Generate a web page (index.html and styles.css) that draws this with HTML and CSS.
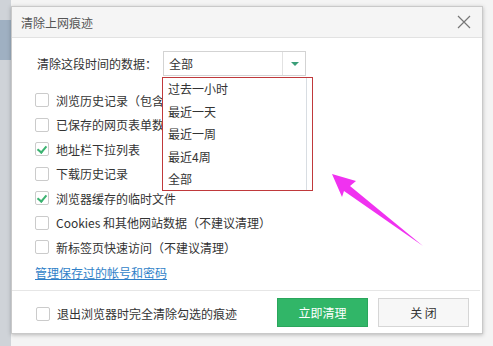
FILE: index.html
```html
<!DOCTYPE html>
<html lang="zh-CN">

<head>
     <meta charset="UTF-8">
     <title>清除上网痕迹</title>
     <link rel="stylesheet" href="styles.css">
</head>

<body>
     <div class="desk">
          <div class="behind"></div>
          <div class="dialog">
               <div class="title">
                    <span>清除上网痕迹</span>
                    <svg class="close" width="14" height="14" viewBox="0 0 14 14">
                         <path d="M1 1L13 13M13 1L1 13" stroke="#777" stroke-width="1.2" fill="none" />
                    </svg>
               </div>
               <div class="content">
                    <div class="range">
                         <span class="label">清除这段时间的数据：</span>
                         <div class="select">
                              <span class="value">全部</span>
                              <span class="caret"></span>
                         </div>
                    </div>
                    <ul class="list">
                         <li><i class="box"></i>浏览历史记录（包含</li>
                         <li><i class="box"></i>已保存的网页表单数</li>
                         <li><i class="box on"></i>地址栏下拉列表</li>
                         <li><i class="box"></i>下载历史记录</li>
                         <li><i class="box on"></i>浏览器缓存的临时文件</li>
                         <li><i class="box"></i>Cookies 和其他网站数据（不建议清理）</li>
                         <li><i class="box"></i>新标签页快速访问（不建议清理）</li>
                    </ul>
                    <a class="manage" href="#">管理保存过的帐号和密码</a>
               </div>
               <div class="foot">
                    <label class="quit"><i class="box"></i>退出浏览器时完全清除勾选的痕迹</label>
                    <button class="btn go">立即清理</button>
                    <button class="btn">关 闭</button>
               </div>

               <ul class="menu">
                    <li>过去一小时</li>
                    <li>最近一天</li>
                    <li>最近一周</li>
                    <li>最近4周</li>
                    <li>全部</li>
               </ul>
          </div>

          <svg class="pointer" width="493" height="346" viewBox="0 0 493 346">
               <polygon points="332,174 356,181 350,186 423,246 344,191 342,197" fill="#f032f0" />
          </svg>
     </div>
</body>

</html>
```

FILE: styles.css
```css
* {
     margin: 0;
     padding: 0;
     box-sizing: border-box;
}

body {
     width: 493px;
     height: 346px;
     overflow: hidden;
     background: #ececec;
     font-family: "Microsoft YaHei", "Noto Sans CJK SC", sans-serif;
     font-size: 12px;
     color: #333;
}

.desk {
     position: relative;
     width: 493px;
     height: 346px;
     padding: 6px 0 0 11px;
     background: linear-gradient(to right, #cfd3d8 0, #cfd3d8 11px, #f4f4f4 11px);
}

.behind {
     position: absolute;
     left: 0;
     top: 20px;
     width: 11px;
     height: 40px;
     background: #9fb0c2;
}

.dialog {
     position: relative;
     width: 472px;
     height: 328px;
     background: #fff;
     border: 1px solid #c9c9c9;
     box-shadow: 0 1px 4px rgba(0, 0, 0, 0.25);
     display: flex;
     flex-direction: column;
}

.title {
     height: 31px;
     background: #f5f5f5;
     border-bottom: 1px solid #e2e2e2;
     display: flex;
     align-items: center;
     justify-content: space-between;
     padding: 0 11px 0 9px;
     color: #555;
}

.content {
     flex: 1;
     padding: 13px 0 0 23px;
}

.range {
     display: flex;
     align-items: center;
     padding-left: 2px;
}

.label {
     width: 126px;
}

.select {
     width: 143px;
     height: 25px;
     border: 1px solid #d3d3d3;
     display: flex;
     align-items: center;
     justify-content: space-between;
}

.value {
     padding-left: 5px;
}

.caret {
     width: 23px;
     height: 23px;
     border-left: 1px solid #e2e2e2;
     position: relative;
}

.caret::after {
     content: "";
     position: absolute;
     left: 8px;
     top: 10px;
     border-left: 4px solid transparent;
     border-right: 4px solid transparent;
     border-top: 4px solid #3a9e79;
}

.list {
     list-style: none;
     margin-top: 12px;
}

.list li {
     height: 24.5px;
     display: flex;
     align-items: center;
}

.box {
     display: inline-block;
     flex: none;
     width: 14px;
     height: 14px;
     border: 1px solid #cbcbcb;
     border-radius: 2px;
     background: #fff;
     margin-right: 7px;
     position: relative;
}

.box.on::after {
     content: "";
     position: absolute;
     left: 3px;
     top: 1px;
     width: 4px;
     height: 7px;
     border-right: 2px solid #3cb371;
     border-bottom: 2px solid #3cb371;
     transform: rotate(40deg);
}

.manage {
     display: block;
     margin-top: 4px;
     color: #2f7fc8;
     text-decoration: underline;
}

.foot {
     height: 43px;
     border-top: 1px solid #e6e6e6;
     display: flex;
     align-items: center;
     padding: 0 11px 0 24px;
     margin-right: 2px;
}

.quit {
     flex: 1;
     display: flex;
     align-items: center;
     padding-top: 3px;
}

.btn {
     flex: none;
     width: 91px;
     height: 29px;
     font-family: inherit;
     font-size: 12px;
     border: 1px solid #d6d6d6;
     background: #f7f7f7;
     color: #333;
     margin-left: 10px;
}

.btn.go {
     background: #31b668;
     border-color: #2aa65c;
     color: #fff;
}

.menu {
     position: absolute;
     left: 150px;
     top: 70px;
     width: 151px;
     height: 114px;
     list-style: none;
     background: #fff;
     border: 1px solid #c0393b;
}

.menu::after {
     content: "";
     position: absolute;
     right: 5px;
     top: 0;
     bottom: 0;
     border-right: 1px solid #d8dde2;
}

.menu li {
     height: 22.6px;
     line-height: 21px;
     padding-left: 5px;
}

.pointer {
     position: absolute;
     left: 0;
     top: 0;
}
```
